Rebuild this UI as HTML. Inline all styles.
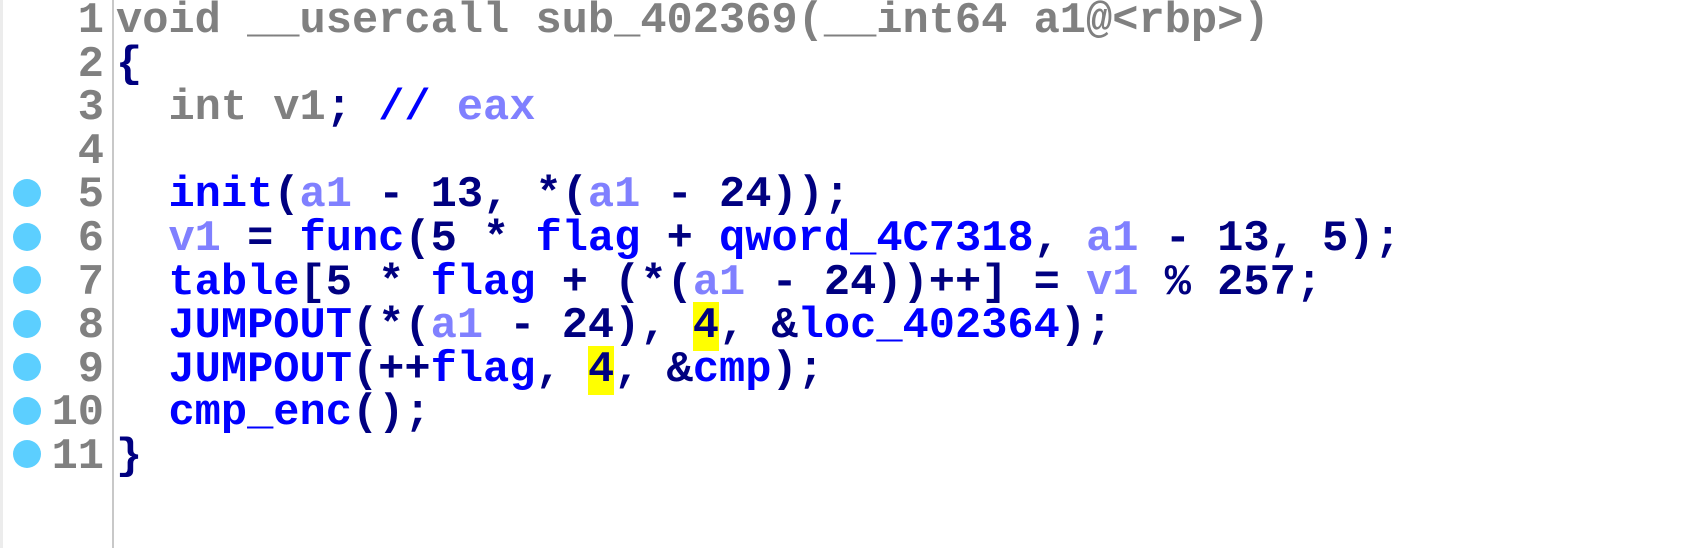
<!DOCTYPE html>
<html><head><style>
html,body{margin:0;padding:0;background:#fff;width:1700px;height:548px;overflow:hidden}
body{position:relative;font-family:"Liberation Mono",monospace;font-weight:bold;font-size:43.7px;}
.strip{position:absolute;left:0;top:0;width:3px;height:548px;background:#ececec}
.gut{position:absolute;left:112px;top:0;width:2px;height:548px;background:#c8c8c8}
.nums{position:absolute;left:0;top:0px;width:104px;text-align:right;color:#808080;line-height:43.6px;white-space:pre}
.code{position:absolute;left:116px;top:0px;line-height:43.6px;white-space:pre;color:#000080}
.dot{position:absolute;left:13px;width:28px;height:28px;border-radius:50%;background:#5ccfff}
.g{color:#808080}.b{color:#0000ff}.l{color:#8080ff}.y{background:#ffff00}
</style></head><body>
<div class="strip"></div>
<div class="gut"></div>
<div class="dot" style="top:179px"></div>
<div class="dot" style="top:223px"></div>
<div class="dot" style="top:266px"></div>
<div class="dot" style="top:310px"></div>
<div class="dot" style="top:353px"></div>
<div class="dot" style="top:397px"></div>
<div class="dot" style="top:440px"></div>
<div class="nums">1
2
3
4
5
6
7
8
9
10
11</div>
<div class="code"><span class="g">void __usercall sub_402369(__int64 a1@&lt;rbp&gt;)</span>
{
  <span class="g">int v1</span>; <span class="b">//</span> <span class="l">eax</span>

  <span class="b">init</span>(<span class="l">a1</span> - 13, *(<span class="l">a1</span> - 24));
  <span class="l">v1</span> = <span class="b">func</span>(5 * <span class="b">flag</span> + <span class="b">qword_4C7318</span>, <span class="l">a1</span> - 13, 5);
  <span class="b">table</span>[5 * <span class="b">flag</span> + (*(<span class="l">a1</span> - 24))++] = <span class="l">v1</span> % 257;
  <span class="b">JUMPOUT</span>(*(<span class="l">a1</span> - 24), <span class="y">4</span>, &amp;<span class="b">loc_402364</span>);
  <span class="b">JUMPOUT</span>(++<span class="b">flag</span>, <span class="y">4</span>, &amp;<span class="b">cmp</span>);
  <span class="b">cmp_enc</span>();
}</div>
</body></html>
